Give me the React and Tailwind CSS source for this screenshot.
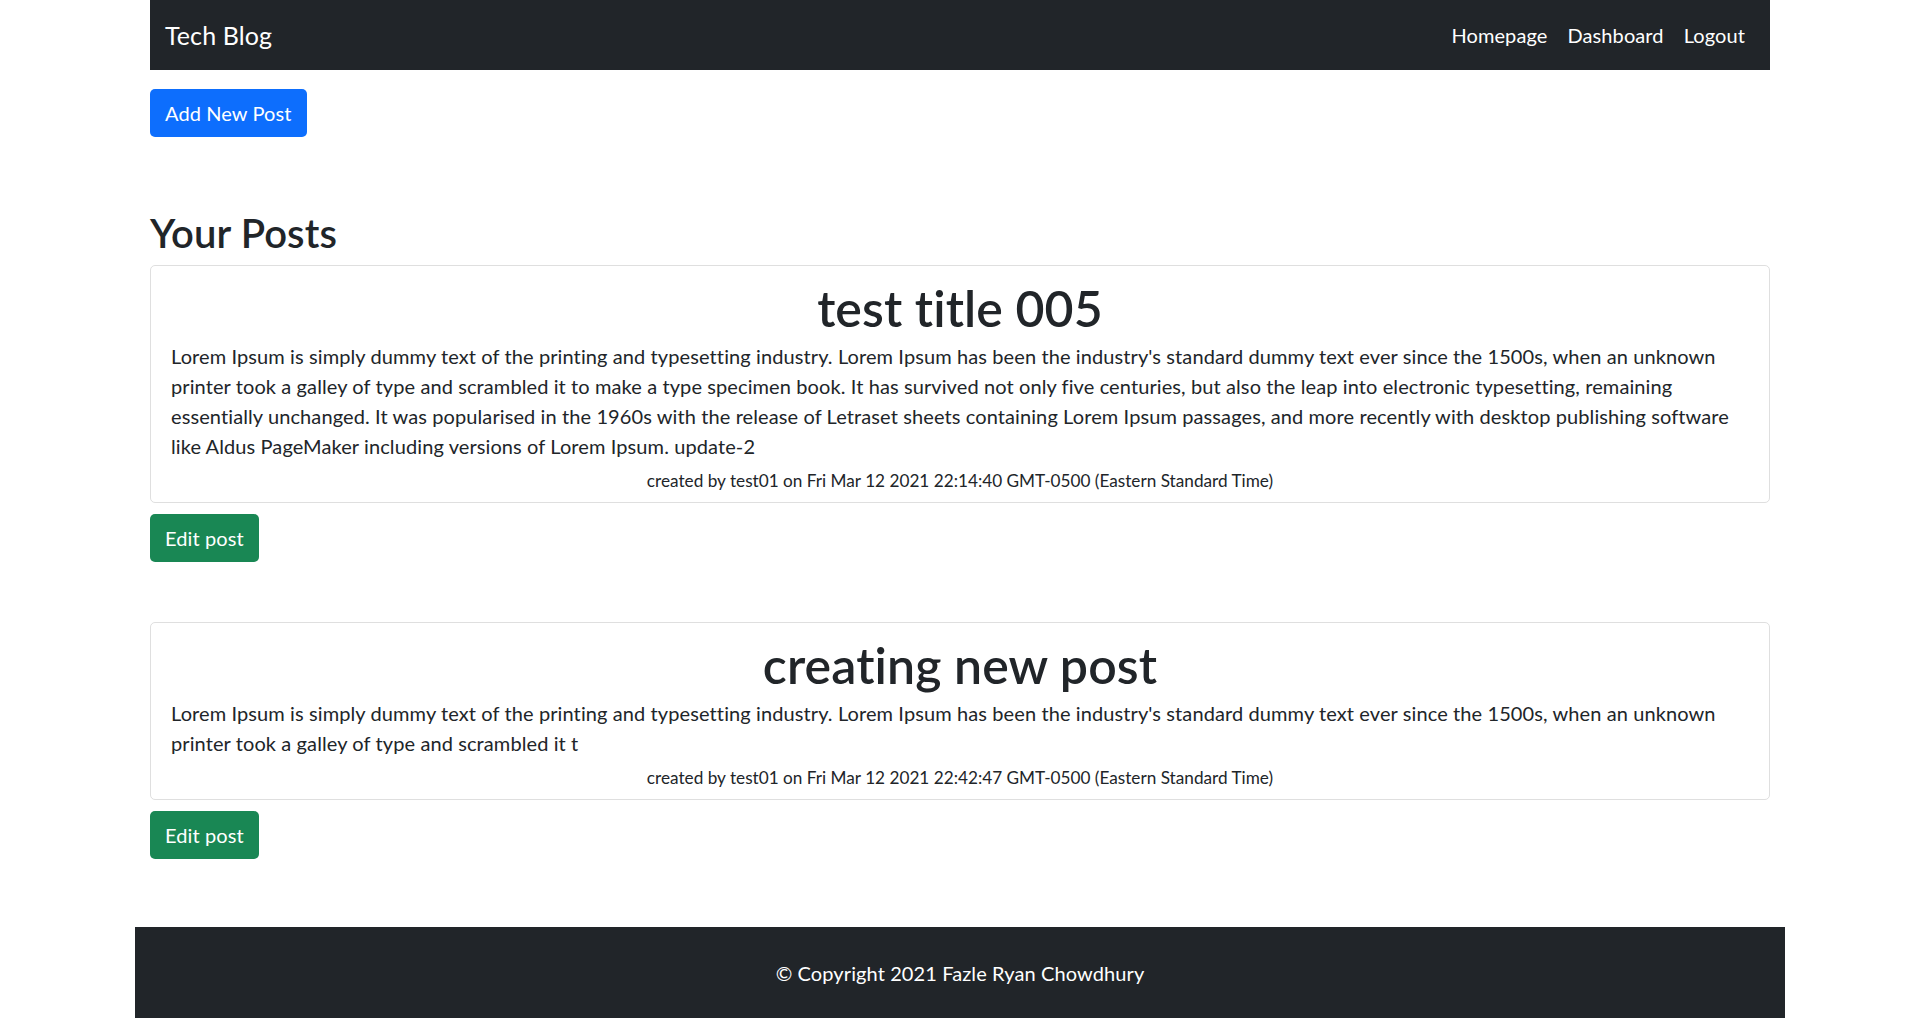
import React from 'react';

const posts = [
  {
    id: 1,
    title: 'test title 005',
    body:
      "Lorem Ipsum is simply dummy text of the printing and typesetting industry. Lorem Ipsum has been the industry's standard dummy text ever since the 1500s, when an unknown printer took a galley of type and scrambled it to make a type specimen book. It has survived not only five centuries, but also the leap into electronic typesetting, remaining essentially unchanged. It was popularised in the 1960s with the release of Letraset sheets containing Lorem Ipsum passages, and more recently with desktop publishing software like Aldus PageMaker including versions of Lorem Ipsum. update-2",
    author: 'test01',
    date: 'Fri Mar 12 2021 22:14:40 GMT-0500 (Eastern Standard Time)',
  },
  {
    id: 2,
    title: 'creating new post',
    body:
      "Lorem Ipsum is simply dummy text of the printing and typesetting industry. Lorem Ipsum has been the industry's standard dummy text ever since the 1500s, when an unknown printer took a galley of type and scrambled it t",
    author: 'test01',
    date: 'Fri Mar 12 2021 22:42:47 GMT-0500 (Eastern Standard Time)',
  },
];

function Navbar() {
  return (
    <nav className="mx-[15px] h-[70px] bg-[#212529] flex items-center justify-between px-[15px]">
      <a href="#" className="text-white text-[25px] leading-[37px]">Tech Blog</a>
      <div className="flex items-center">
        <a href="#" className="text-white text-[20px] px-[10px]">Homepage</a>
        <a href="#" className="text-white text-[20px] px-[10px]">Dashboard</a>
        <a href="#" className="text-white text-[20px] px-[10px]">Logout</a>
      </div>
    </nav>
  );
}

function PostCard({ post }) {
  return (
    <div className="mb-[60px]">
      <div className="border border-[#dfdfdf] rounded-[5px] px-[20px] pt-[12px] pb-[8px]">
        <h1 className="text-center text-[50px] leading-[60px] font-semibold mb-[3px]">{post.title}</h1>
        <p className="text-[20px] leading-[30px]">{post.body}</p>
        <p className="text-center text-[17.2px] leading-[26px] tracking-normal mt-[7px]">
          created by {post.author} on {post.date}
        </p>
      </div>
      <button className="mt-[11px] bg-[#198754] text-white text-[20px] leading-[30px] px-[15px] py-[9px] rounded-[5px]">
        Edit post
      </button>
    </div>
  );
}

export default function App() {
  return (
    <div className="min-h-screen bg-white text-[#212529] tracking-[0.1px] [font-family:Lato,sans-serif]">
      <div className="w-[1650px] mx-auto">
        <Navbar />

        <main className="px-[15px]">
          <button className="mt-[19px] bg-[#0d6efd] text-white text-[20px] leading-[30px] px-[15px] py-[9px] rounded-[5px]">
            Add New Post
          </button>

          <h2 className="mt-[72px] mb-[8px] text-[40px] leading-[48px] font-semibold">Your Posts</h2>

          {posts.map((post) => (
            <PostCard key={post.id} post={post} />
          ))}
        </main>

        <footer className="mt-[68px] bg-[#212529] text-white text-center text-[20px] leading-[30px] pt-[31px] pb-[40px]">
          © Copyright 2021 Fazle Ryan Chowdhury
        </footer>
      </div>
    </div>
  );
}
